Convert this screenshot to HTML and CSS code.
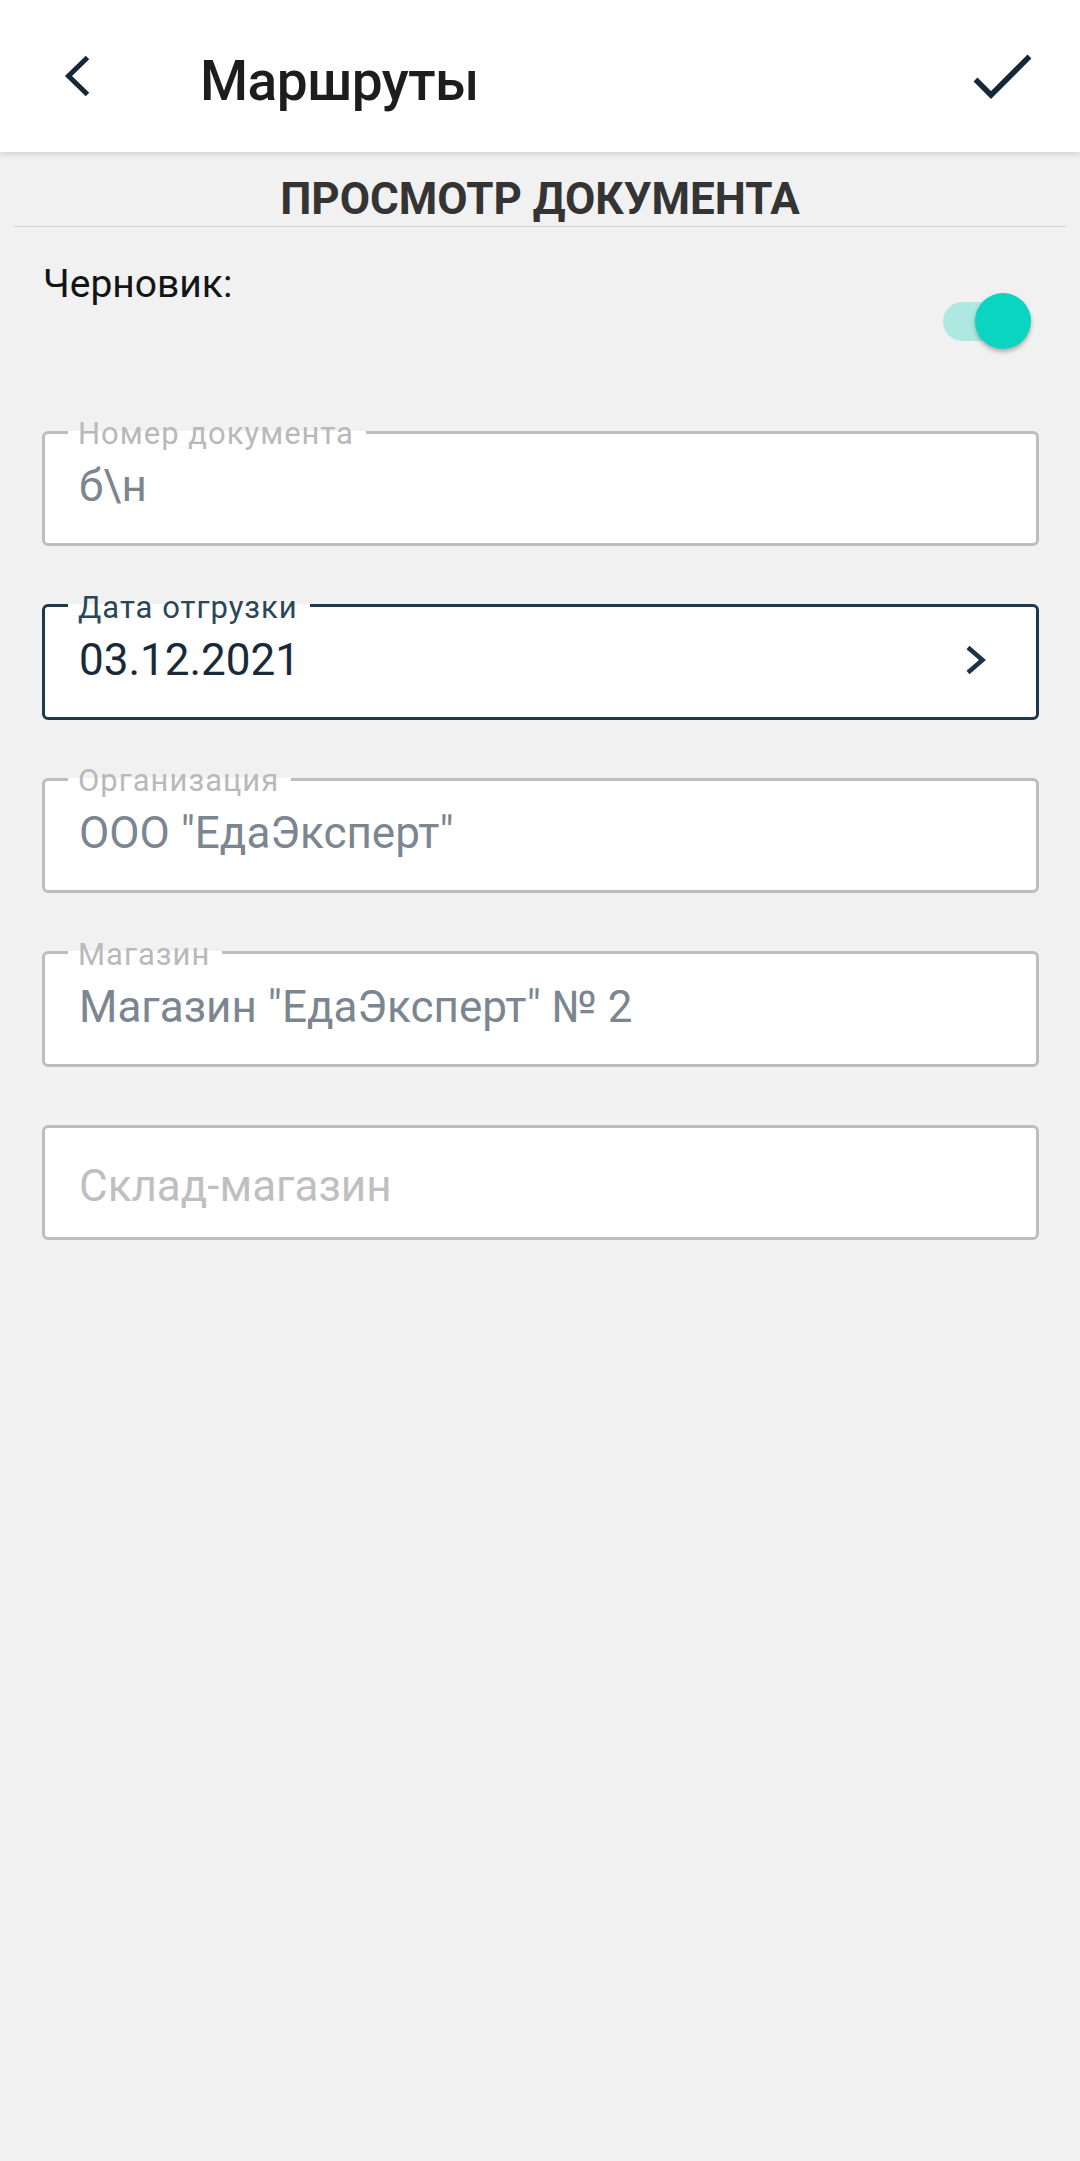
FILE: index.html
```html
<!DOCTYPE html>
<html lang="ru">
<head>
<meta charset="utf-8">
<title>Маршруты</title>
<link rel="stylesheet" href="styles.css">
</head>
<body>
<header class="appbar">
  <svg class="icon-back" width="60" height="60" viewBox="0 0 60 60"><polyline points="39.5,11.5 20.5,30 39.5,48.5" fill="none" stroke="#15283a" stroke-width="5" stroke-linejoin="miter"/></svg>
  <h1 class="appbar-title">Маршруты</h1>
  <div class="spacer"></div>
  <svg class="icon-check" width="84" height="84" viewBox="0 0 84 84"><polyline points="15.5,45.5 31,61 69.5,22.5" fill="none" stroke="#15283a" stroke-width="5.5" stroke-linejoin="miter"/></svg>
</header>

<main class="content">
  <h2 class="section-title">ПРОСМОТР ДОКУМЕНТА</h2>
  <div class="divider"></div>

  <div class="draft-row">
    <span class="draft-label">Черновик:</span>
    <div class="switch">
      <div class="switch-track"></div>
      <div class="switch-thumb"></div>
    </div>
  </div>

  <div class="fields">
    <fieldset class="field">
      <legend class="field-label">Номер документа</legend>
      <div class="field-value">б\н</div>
    </fieldset>

    <fieldset class="field field-focused">
      <legend class="field-label">Дата отгрузки</legend>
      <div class="field-value">
        <span>03.12.2021</span>
        <svg class="icon-chevron" width="30" height="40" viewBox="0 0 30 40"><polyline points="8,7.5 22.5,20 8,32.5" fill="none" stroke="#1c3145" stroke-width="4.5" stroke-linejoin="miter"/></svg>
      </div>
    </fieldset>

    <fieldset class="field">
      <legend class="field-label">Организация</legend>
      <div class="field-value">ООО "ЕдаЭксперт"</div>
    </fieldset>

    <fieldset class="field">
      <legend class="field-label">Магазин</legend>
      <div class="field-value">Магазин "ЕдаЭксперт" № 2</div>
    </fieldset>

    <fieldset class="field field-empty">
      <legend class="field-label field-label-empty"></legend>
      <div class="field-value field-placeholder">Склад-магазин</div>
    </fieldset>
  </div>
</main>
</body>
</html>
```

FILE: styles.css
```css
* {
  box-sizing: border-box;
}

html, body {
  margin: 0;
  padding: 0;
}

body {
  width: 1080px;
  min-height: 2161px;
  background: #f1f1f1;
  font-family: Roboto, "Noto Sans", "Liberation Sans", sans-serif;
  color: #1c1c1c;
}

.appbar {
  position: relative;
  z-index: 1;
  height: 152px;
  background: #ffffff;
  display: flex;
  align-items: center;
  padding: 0 36px 0 48px;
  box-shadow: 0 2px 6px rgba(0, 0, 0, 0.14);
}

.icon-back {
  display: block;
  flex: none;
}

.appbar-title {
  margin: 10px 0 0 92px;
  font-size: 55px;
  line-height: 64px;
  font-weight: 500;
  letter-spacing: -0.5px;
  color: #1d1d1d;
}

.spacer {
  flex: 1;
}

.icon-check {
  display: block;
  flex: none;
}

.content {
  display: flex;
  flex-direction: column;
}

.section-title {
  margin: 0;
  padding-top: 21px;
  font-size: 44px;
  line-height: 52px;
  font-weight: 700;
  text-align: center;
  color: #343434;
}

.divider {
  height: 1px;
  margin: 1px 14px 0;
  background: #d2d2d2;
}

.draft-row {
  display: flex;
  justify-content: space-between;
  align-items: flex-start;
  padding: 0 49px 0 43px;
}

.draft-label {
  margin-top: 34px;
  font-size: 39px;
  line-height: 46px;
  color: #141414;
}

.switch {
  position: relative;
  width: 88px;
  height: 56px;
  margin-top: 66px;
}

.switch-track {
  width: 79px;
  height: 39px;
  margin-top: 8.5px;
  border-radius: 20px;
  background: #aee9e1;
}

.switch-thumb {
  position: absolute;
  right: 0;
  top: 0;
  width: 56px;
  height: 56px;
  border-radius: 50%;
  background: #0bd5c0;
  box-shadow: 0 3px 4px rgba(0, 0, 0, 0.28);
}

.fields {
  display: flex;
  flex-direction: column;
  gap: 42.5px;
  margin: 66px 41px 0 42px;
}

.field {
  margin: 0;
  min-width: 0;
  padding: 0 46px 31px 34px;
  border: 3px solid #bdbdbd;
  border-radius: 6px;
  background: #ffffff;
}

.field-label {
  margin-left: -11px;
  padding: 4px 12px 0 10px;
  font-size: 31px;
  line-height: 30px;
  letter-spacing: 1px;
  color: #b9b9b9;
}

.field-label-empty {
  height: 34px;
  padding: 0;
  width: 0;
}

.field-value {
  display: flex;
  justify-content: space-between;
  align-items: center;
  height: 52px;
  margin-top: 11px;
  font-size: 44px;
  line-height: 52px;
  color: #7b8691;
  white-space: nowrap;
}

.field-focused {
  border-color: #1f394c;
}

.field-focused .field-label {
  color: #2a4659;
}

.field-focused .field-value {
  color: #182a3a;
}

.icon-chevron {
  display: block;
  flex: none;
}

.field-empty {
  padding-bottom: 25px;
}

.field-placeholder {
  margin-top: 17px;
  color: #bfbfbf;
}
```
